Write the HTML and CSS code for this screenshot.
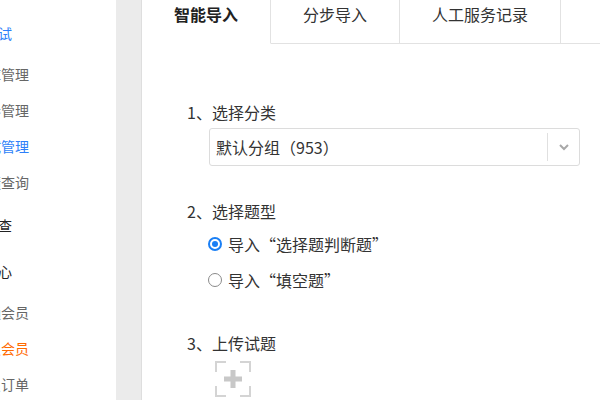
FILE: index.html
```html
<!DOCTYPE html>
<html lang="zh-CN">
<head>
<meta charset="utf-8">
<link rel="stylesheet" href="styles.css">
</head>
<body>
<div class="page">
  <aside class="sidebar">
    <div class="side-inner">
      <div class="group">
        <div class="group-title active">在线考试</div>
        <ul class="items">
          <li>题库管理</li>
          <li>试卷管理</li>
          <li class="active">考试管理</li>
          <li>成绩查询</li>
        </ul>
      </div>
      <div class="group">
        <div class="group-title">阅卷审查</div>
      </div>
      <div class="group">
        <div class="group-title">会员中心</div>
        <ul class="items">
          <li>普通会员</li>
          <li class="hot">高级会员</li>
          <li>会员订单</li>
        </ul>
      </div>
    </div>
  </aside>
  <div class="gutter"></div>
  <main class="main">
    <nav class="tabs">
      <div class="tab current">智能导入</div>
      <div class="tab">分步导入</div>
      <div class="tab">人工服务记录</div>
      <div class="tab-rest"></div>
    </nav>
    <section class="content">
      <div class="step">
        <div class="step-title">1、选择分类</div>
        <div class="select">
          <span class="select-value">默认分组（953）</span>
          <span class="select-arrow">
            <svg width="12" height="8" viewBox="0 0 12 8"><path d="M2 2 L6 6 L10 2" fill="none" stroke="#a8a8a8" stroke-width="2"/></svg>
          </span>
        </div>
      </div>
      <div class="step">
        <div class="step-title">2、选择题型</div>
        <div class="radios">
          <label class="radio"><span class="dot checked"></span>导入“选择题判断题”</label>
          <label class="radio"><span class="dot"></span>导入“填空题”</label>
        </div>
      </div>
      <div class="step">
        <div class="step-title">3、上传试题</div>
        <div class="upload">
          <svg width="36" height="36" viewBox="0 0 36 36">
            <path d="M1 11 V1 H11 M25 1 H35 V11 M35 25 V35 H25 M11 35 H1 V25" fill="none" stroke="#d4d4d4" stroke-width="2"/>
            <rect x="15.5" y="9" width="5" height="18" fill="#c8c8c8"/>
            <rect x="9" y="15.5" width="18" height="5" fill="#c8c8c8"/>
          </svg>
        </div>
      </div>
    </section>
  </main>
</div>
</body>
</html>
```
FILE: styles.css
```css
* { box-sizing: border-box; }
html, body { margin: 0; padding: 0; background: #fff; }
body {
  font-family: "Noto Sans CJK SC", "Microsoft YaHei", sans-serif;
  color: #333;
  width: 600px;
  height: 400px;
  overflow: hidden;
}
.page { display: flex; height: 400px; }

.sidebar { width: 116px; flex: none; overflow: hidden; background: #fff; }
.side-inner { margin-left: -60px; padding-top: 12px; font-size: 14px; }
.group { margin-top: 4px; }
.group:first-child { margin-top: 0; }
.group-title { height: 42px; line-height: 42px; padding-left: 16px; color: #222; white-space: nowrap; }
.group-title.active { color: #2d7ff9; }
.items { list-style: none; margin: 2px 0 0; padding: 0; }
.items li { height: 36px; line-height: 36px; padding-left: 33px; color: #666; white-space: nowrap; }
.items li.active { color: #2d7ff9; }
.items li.hot { color: #ff6a00; }

.gutter { width: 26px; flex: none; background: #ebebeb; border-right: 1px solid #dedede; }

.main { flex: 1; min-width: 0; }
.tabs { display: flex; height: 44px; }
.tab {
  padding: 0 32px;
  height: 44px;
  line-height: 28px;
  font-size: 16px;
  color: #333;
  border-right: 1px solid #e2e2e2;
  border-bottom: 1px solid #e2e2e2;
  white-space: nowrap;
}
.tab.current { font-weight: bold; color: #222; border-bottom-color: transparent; }
.tab-rest { flex: 1; border-bottom: 1px solid #e2e2e2; }

.content { padding: 56px 20px 0 45px; }
.step { margin-bottom: 33px; }
.step-title { font-size: 16px; line-height: 24px; color: #333; }
.select {
  margin: 4px 0 0 22px;
  height: 38px;
  border: 1px solid #dcdcdc;
  border-radius: 3px;
  display: flex;
  align-items: center;
}
.select-value { flex: 1; padding-left: 6px; font-size: 16px; color: #333; }
.select-arrow {
  width: 32px;
  height: 28px;
  border-left: 1px solid #e0e0e0;
  display: flex;
  align-items: center;
  justify-content: center;
}
.radios { margin: 3px 0 0 21px; }
.radio { display: flex; align-items: center; height: 36px; font-size: 16px; color: #333; }
.dot {
  width: 14px;
  height: 14px;
  border: 1px solid #8a8a8a;
  border-radius: 50%;
  margin-right: 6px;
  position: relative;
  flex: none;
}
.dot.checked { border: 2px solid #1a7ff5; }
.dot.checked::after {
  content: "";
  position: absolute;
  left: 2px; top: 2px;
  width: 6px; height: 6px;
  border-radius: 50%;
  background: #1a7ff5;
}
.upload { margin: 6px 0 0 28px; height: 36px; }
.upload svg { display: block; }
```
